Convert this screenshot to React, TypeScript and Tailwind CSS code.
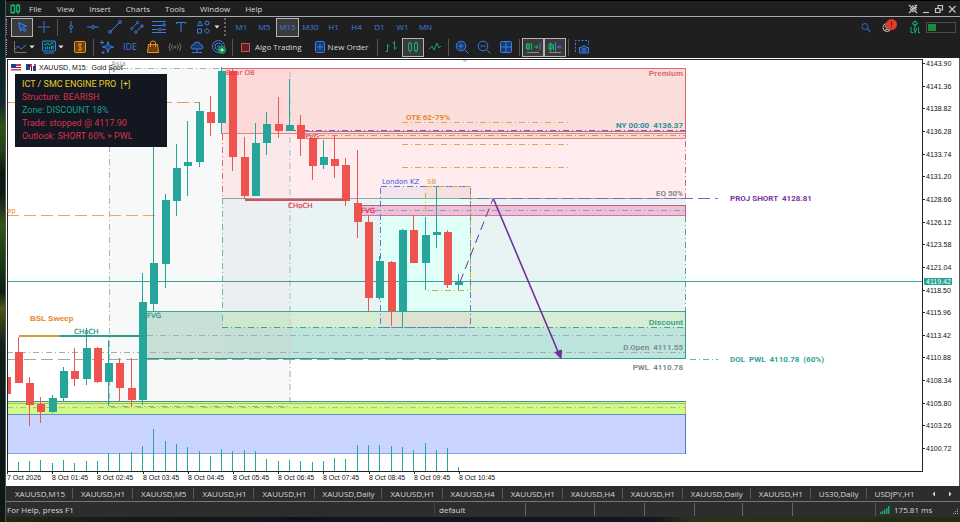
import type { ReactNode } from 'react'
import clsx from 'clsx'

const GREEN = '#26a69a'
const RED = '#ef5350'

const DASH = '6 3 1 3'
const LONG_DASH = '12 5'

// side, high, body top, body bottom, low (already in chart units), volume top
type Candle = [string, number, number, number, number, number]

const FIRST_X = 18.7
const STEP = 11.3

const candles: Candle[] = [
  ['r', 337, 352, 383, 383, 462],
  ['r', 377, 383, 405, 426, 461],
  ['r', 397, 404, 412, 423, 460],
  ['g', 395, 398, 412, 413, 463],
  ['g', 367, 371, 398, 402, 460],
  ['r', 348, 371, 379, 386, 463],
  ['g', 328, 348, 379, 385, 461],
  ['r', 347, 348, 382, 383, 461],
  ['g', 340, 363, 382, 406, 453],
  ['r', 358, 363, 388, 401, 453],
  ['r', 358, 388, 400, 407, 452],
  ['g', 273, 302, 400, 405, 446],
  ['g', 140, 263, 304, 311, 429],
  ['g', 194, 200, 264, 288, 441],
  ['g', 144, 168, 201, 216, 444],
  ['g', 121, 162, 166, 196, 447],
  ['g', 102, 111, 162, 167, 451],
  ['r', 96, 112, 123, 136, 456],
  ['g', 67, 71, 123, 134, 449],
  ['r', 68, 71, 157, 171, 451],
  ['r', 137, 157, 196, 199, 450],
  ['g', 123, 143, 196, 196, 451],
  ['g', 112, 124, 143, 155, 459],
  ['r', 97, 124, 131, 138, 461],
  ['g', 79, 125, 131, 131, 460],
  ['r', 115, 125, 139, 156, 461],
  ['r', 138, 138, 166, 180, 462],
  ['g', 140, 157, 165, 169, 461],
  ['r', 135, 159, 166, 178, 458],
  ['r', 158, 165, 201, 206, 459],
  ['r', 150, 203, 222, 238, 445],
  ['r', 215, 222, 298, 312, 445],
  ['g', 256, 261, 298, 300, 445],
  ['r', 261, 262, 311, 326, 446],
  ['g', 229, 230, 312, 327, 447],
  ['r', 215, 230, 263, 263, 450],
  ['g', 217, 235, 263, 290, 443],
  ['g', 187, 232, 235, 248, 450],
  ['r', 230, 232, 285, 288, 448],
  ['g', 274, 282, 285, 290, 467],
]

const prices = [
  '4143.90', '4141.36', '4138.82', '4136.28', '4133.74', '4131.20', '4128.66', '4126.12', '4123.58',
  '4121.04', '4118.50', '4115.96', '4113.42', '4110.88', '4108.34', '4105.80', '4103.26', '4100.72',
]

const times = [
  '7 Oct 2026', '8 Oct 01:45', '8 Oct 02:45', '8 Oct 03:45', '8 Oct 04:45', '8 Oct 05:45',
  '8 Oct 06:45', '8 Oct 07:45', '8 Oct 08:45', '8 Oct 09:45', '8 Oct 10:45',
]

const menus = ['File', 'View', 'Insert', 'Charts', 'Tools', 'Window', 'Help']
const frames = ['M1', 'M5', 'M15', 'M30', 'H1', 'H4', 'D1', 'W1', 'MN']
const tabs = [
  'XAUUSD,M15', 'XAUUSD,H1', 'XAUUSD,M5', 'XAUUSD,H1', 'XAUUSD,H1', 'XAUUSD,Daily', 'XAUUSD,H1', 'XAUUSD,H4',
  'XAUUSD,H1', 'XAUUSD,H4', 'XAUUSD,H1', 'XAUUSD,Daily', 'XAUUSD,H1', 'US30,Daily', 'USDJPY,H1',
]

interface IconProps {
  children: ReactNode
  className?: string
}

function Icon({ children, className = 'text-[#3b7de0]' }: IconProps) {
  return (
    <svg viewBox="0 0 16 16" className={clsx('size-4 shrink-0', className)} fill="none" stroke="currentColor" strokeWidth="1" aria-hidden="true">
      {children}
    </svg>
  )
}

function WindowButton({ label, path }: { label: string; path: string }) {
  return (
    <button type="button" aria-label={label}>
      <svg viewBox="0 0 10 10" className="size-[10px]" fill="none" stroke="#c4c4c4" strokeWidth="1.200" aria-hidden="true">
        <path d={path} />
      </svg>
    </button>
  )
}

interface ToolButtonProps {
  label: string
  active?: boolean
  narrow?: boolean
  children: ReactNode
}

function ToolButton({ label, active, narrow, children }: ToolButtonProps) {
  return (
    <button
      type="button"
      aria-label={label}
      className={clsx(
        'flex h-[19px] shrink-0 items-center justify-center',
        narrow ? 'w-[18px]' : 'w-[22px]',
        active && 'border border-[#b4b4b4] bg-[#3a3a3a]'
      )}
    >
      {children}
    </button>
  )
}

function Separator() {
  return <div className="mx-[2px] h-[17px] w-px shrink-0 bg-[#555]" />
}

function Chevron() {
  return (
    <svg viewBox="0 0 6 4" className="h-1 w-1.5 shrink-0" aria-hidden="true">
      <path d="M0.5 0.5h5L3 3.5z" fill="#e5e5e5" />
    </svg>
  )
}

function MenuBar() {
  return (
    <header className="flex h-4 items-center border-b border-[#a9a9a9] bg-[#1f1f1f] pr-[3px] pl-px">
      <Icon className="text-[#12b76a]">
        <path d="M4 4.500h3.500v7H4zM9.500 4.500h3v6h-3zM6 3v1.500M6 11.500V13M11 3v1.500M11 10.500V13" strokeWidth="1.300" />
      </Icon>
      <nav className="ml-[6px] flex gap-[15px]">
        {menus.map((m) => (
          <button key={m} type="button">{m}</button>
        ))}
      </nav>
      <div className="ml-auto flex items-center gap-[3px]">
        <WindowButton label="Pin" path="M1 1l8 8M9 1L1 9M4 1.500l4.500 4.500M6.500 1L9 3.500M2 4.500l3.500 3.500" />
        <WindowButton label="Minimize" path="M2 8.500h6" />
        <WindowButton label="Restore" path="M1.500 4.500h4.500v4H1.500zM4 4V1.500h4.500v4.500H6" />
        <WindowButton label="Close" path="M2 2l6.500 6.500M8.500 2L2 8.500" />
      </div>
    </header>
  )
}

function DrawingBar() {
  return (
    <div className="flex h-5 items-center pr-1">
      <div className="mr-1 h-4 border-l border-dotted border-[#999]" />
      <ToolButton label="Cursor" active>
        <Icon><path d="M4.500 3.500l8 3.500-3.200 1.200 2.700 3-1.500 1.300-2.600-3-1.400 2.700z" fill="#1d4f9c" /></Icon>
      </ToolButton>
      <ToolButton label="Crosshair">
        <Icon><path d="M8 2v4.500M8 9.500V14M2 8h4.500M9.500 8H14M8 7v2M7 8h2" /></Icon>
      </ToolButton>
      <Separator />
      <ToolButton label="Vertical line">
        <Icon><path d="M8 2v4M8 10v4" /><circle cx="8" cy="8" r="1.500" /></Icon>
      </ToolButton>
      <ToolButton label="Horizontal line">
        <Icon><path d="M2 8h4M10 8h4" /><circle cx="8" cy="8" r="1.500" /></Icon>
      </ToolButton>
      <ToolButton label="Trendline">
        <Icon><path d="M4 12l8-8" /><circle cx="3" cy="13" r="1.400" /><circle cx="13" cy="3" r="1.400" /></Icon>
      </ToolButton>
      <ToolButton label="Channel">
        <Icon><path d="M3.800 8.500l3.900-4M7.800 12l4.200-4" /><circle cx="8.500" cy="3.500" r="1.200" /><circle cx="2.800" cy="9.500" r="1.200" /><circle cx="13" cy="7" r="1.200" /><circle cx="6.800" cy="13" r="1.200" /></Icon>
      </ToolButton>
      <ToolButton label="Fibonacci">
        <Icon><path d="M1 2.500h14M1 6.500h10M1 10.500h6M11 10.500h4M1 13.500h14" /><circle cx="13" cy="6" r="1.300" /><circle cx="9" cy="10.500" r="1.300" /></Icon>
      </ToolButton>
      <ToolButton label="Text">
        <Icon><path d="M3.500 5V3.500h9V5M8 3.500v9.500" /></Icon>
      </ToolButton>
      <ToolButton label="Objects">
        <Icon><path d="M5 2L7.500 6.500h-5z" /><circle cx="12" cy="4" r="2" /><path d="M2.500 10h4v4h-4zM12 9.500l2.500 2.500-2.500 2.500L9.500 12z" /></Icon>
      </ToolButton>
      <Chevron />
      <div className="mx-1 h-[18px] border-l-2 border-dotted border-[#666]" />
      {frames.map((f) => (
        <button
          key={f}
          type="button"
          className={clsx(
            'h-[19px] w-[23px] shrink-0 text-center text-[#3b7de0]',
            f === 'M15' && 'border border-[#b4b4b4] bg-[#3a3a3a]'
          )}
        >
          {f}
        </button>
      ))}
      <div className="ml-auto flex items-center">
        <button type="button" aria-label="Search" className="mr-2">
          <Icon className="text-[#3268c0]"><circle cx="8" cy="7.500" r="3" /><path d="M10.300 9.800l3 3" strokeWidth="1.300" /></Icon>
        </button>
        <button type="button" aria-label="Account, 1 alert" className="relative mr-2">
          <Icon className="text-[#bdbdbd]"><circle cx="6" cy="8.500" r="4" /><circle cx="6" cy="7.500" r="1.500" /><path d="M3.500 11.500q2.500-3 5 0" /></Icon>
          <svg viewBox="0 0 11 11" className="absolute top-0 right-0 size-[11px]" aria-hidden="true">
            <circle cx="5.500" cy="5.500" r="5.500" fill="#e03a28" />
            <path d="M5.500 2.500v4M5.500 7.500v1" stroke="#5a100a" />
          </svg>
        </button>
        <div className="mr-px flex w-5 flex-col items-center">
          <svg viewBox="0 0 12 14" className="h-3.5 w-3" fill="none" stroke="#12a467" strokeWidth="1.100" aria-label="Level">
            <path d="M6 1l2.500 2.500L6 6 3.500 3.500zM6 4v4M2 7v5.500h2.500M4.800 8l1.400 4.500L7.600 8M9.500 7v5.500h1.500" />
          </svg>
        </div>
        <div className="h-[11px] w-[30px] border border-[#4c4c4c] p-px">
          <div className="h-full w-2 bg-[#1d8a3a]" />
        </div>
      </div>
    </div>
  )
}

function StandardBar() {
  return (
    <div className="flex h-5 items-center">
      <div className="mr-1 h-4 border-l border-dotted border-[#999]" />
      <ToolButton label="Line studies" narrow>
        <Icon><path d="M2.500 2v11.500h12" stroke="#777" /><path d="M3 10.500l3-3.500 3 3 5-4" /></Icon>
      </ToolButton>
      <Chevron />
      <div className="w-[5px]" />
      <ToolButton label="Indicators" narrow>
        <Icon><rect x="1.500" y="2" width="13" height="10" rx="1" fill="#12304f" /><path d="M3 14h10" /><path d="M3.500 6l3-1.500 2 1 4-2M4.500 10V8M6.500 10V7.500M8.500 10V8M10.500 10V7M12 10V6.500" stroke="#12b76a" /></Icon>
      </ToolButton>
      <Chevron />
      <div className="w-[5px]" />
      <ToolButton label="Trade">
        <Icon className="text-[#e8952b]"><rect x="2.500" y="2.500" width="11" height="11" rx="1" fill="#6a400c" /><path d="M10 5.800q-1-1-2.200-.9c-2.400.2-2 2.700.2 3.100 2.400.4 2.600 3 0 3.100q-1.400 0-2.300-1M8 3.800v8.400" /></Icon>
      </ToolButton>
      <Separator />
      <ToolButton label="Assistant">
        <Icon><path d="M9 2.500l1.300 4.200L14.500 8l-4.200 1.300L9 13.500 7.700 9.300 3.500 8l4.200-1.300z" fill="#173c70" /><path d="M3 1.500v4M1 3.500h4M4 12v3M2.500 13.500h3" /></Icon>
      </ToolButton>
      <button type="button" className="w-6 text-center text-[9px] text-[#3b7de0]">IDE</button>
      <ToolButton label="Market">
        <Icon className="text-[#e8952b]"><path d="M3.500 5.500h9l1 8h-11z" fill="#6a400c" /><path d="M5.500 8V4q0-2 2.500-2t2.500 2v4" /></Icon>
      </ToolButton>
      <ToolButton label="Signals">
        <Icon className="text-[#6f6f6f]"><circle cx="8" cy="8" r="1" /><path d="M5.500 5.500q-1.800 2.500 0 5M10.500 5.500q1.800 2.500 0 5M3.500 4q-3 4 0 8M12.500 4q3 4 0 8" /></Icon>
      </ToolButton>
      <ToolButton label="Cloud">
        <Icon><path d="M4 10q-2.500-.3-2-2.500Q2.500 6 4.300 6 5 3 8 3t3.500 3q2.500 0 2.500 2t-2.300 2z" fill="#173c70" /><path d="M8 10v3M3 13.500h10M6.500 13.500h3" /></Icon>
      </ToolButton>
      <ToolButton label="Network">
        <Icon><circle cx="7.500" cy="7.500" r="6" /><circle cx="7.500" cy="7.500" r="3.500" /><circle cx="7.500" cy="7.500" r="1" /><circle cx="11" cy="11" r="3.500" fill="#0e7d43" stroke="#12b76a" /><path d="M11 9v4M9 11h4" stroke="#d7f7e5" /></Icon>
      </ToolButton>
      <Separator />
      <button type="button" className="ml-[6px] flex items-center gap-[5px]">
        <span className="size-[9px] border border-[#cf5050] bg-[#5a2222]" />
        Algo Trading
      </button>
      <button type="button" className="mr-[6px] ml-[10px] flex items-center">
        <Icon><rect x="3.500" y="2.500" width="9" height="11" rx="1" fill="#173c70" /><path d="M8 5v6M5 8h6" /></Icon>
        New Order
      </button>
      <Separator />
      <ToolButton label="Bar chart">
        <Icon className="text-[#12a467]"><path d="M4.500 5v8M2.500 12.500h2M4.500 7h2M11.500 2v9M9.500 4h2M11.500 9h2.500" /></Icon>
      </ToolButton>
      <ToolButton label="Candlesticks" active>
        <Icon className="text-[#12b76a]"><path d="M3.500 4.500h3v7h-3zM9.500 4.500h3v7h-3zM5 2.500v2M5 11.500v2M11 2.500v2M11 11.500v2" /></Icon>
      </ToolButton>
      <ToolButton label="Line chart">
        <Icon className="text-[#12a467]"><path d="M2 10l3-3 2 4 3-7 2 5 2-2" /></Icon>
      </ToolButton>
      <Separator />
      <ToolButton label="Zoom in">
        <Icon><circle cx="7" cy="7" r="4.800" fill="#173c70" /><path d="M10.500 10.500l4 4M7 4.500v5M4.500 7h5" /></Icon>
      </ToolButton>
      <ToolButton label="Zoom out">
        <Icon><circle cx="7" cy="7" r="4.800" /><path d="M10.500 10.500l4 4M4.500 7h5" /></Icon>
      </ToolButton>
      <ToolButton label="Tile windows">
        <Icon><rect x="2.500" y="2.500" width="11" height="11" rx="1" fill="#173c70" /><path d="M8 2.500v11M2.500 8h11" /></Icon>
      </ToolButton>
      <Separator />
      <ToolButton label="Auto scroll" active>
        <Icon className="text-[#12b76a]"><path d="M3 4v7M1.500 5h3v5h-3zM6.500 4v7M9 8h4M11.500 6.500L13 8l-1.500 1.500" /><path d="M2 13.500h12" stroke="#888" /><path d="M15 4v7" stroke="#3b7de0" /></Icon>
      </ToolButton>
      <ToolButton label="Chart shift" active>
        <Icon className="text-[#12b76a]"><path d="M3.500 3.500v9M2 5h3v5H2zM6.500 5v6" /><path d="M8.500 3v10M14.500 8h-4M12 6.500L10.500 8 12 9.500" stroke="#3b7de0" /><path d="M2 13.500h12" stroke="#888" /></Icon>
      </ToolButton>
      <Separator />
      <ToolButton label="Screenshot">
        <Icon><path d="M1.500 13V1.500h13V6" strokeDasharray="2 1.500" /><path d="M5.500 8.500h2l1-1.500h3l1 1.500h2v5.500h-9z" fill="#173c70" /><circle cx="10" cy="11" r="1.500" /></Icon>
      </ToolButton>
    </div>
  )
}

interface LineProps {
  x1: number
  x2: number
  y: number
  color: string
  dash?: string
  width?: number
}

function HLine({ x1, x2, y, color, dash, width = 1 }: LineProps) {
  return <line x1={x1} x2={x2} y1={y} y2={y} stroke={color} strokeWidth={width} strokeDasharray={dash} />
}

function Zones() {
  return (
    <g shapeRendering="crispEdges">
      {/* Asia session */}
      <rect x="109" y="68" width="181" height="338" fill="#f7f9f9" />

      {/* premium / discount halves */}
      <rect x="222" y="68" width="464" height="66" fill="#f9dedb" />
      <rect x="222" y="68" width="68" height="66" fill="#fdd8d9" />
      <rect x="222" y="134" width="464" height="64" fill="#feecee" />
      <rect x="222" y="134" width="68" height="64" fill="#f9eae9" />
      <rect x="222" y="198" width="464" height="113" fill="#e8f4f3" />
      <rect x="222" y="198" width="68" height="113" fill="#eceff1" />

      {/* bullish gap */}
      <rect x="147" y="311" width="75" height="48" fill="#c8e0d8" />
      <rect x="222" y="311" width="464" height="16" fill="#d6ecd3" />
      <rect x="222" y="311" width="68" height="16" fill="#cfe8cd" />
      <rect x="222" y="327" width="464" height="32" fill="#bee4de" />
      <rect x="222" y="327" width="68" height="32" fill="#c4dfd7" />

      {/* killzones */}
      <rect x="380" y="186" width="91" height="12" fill="#f3e3ea" />
      <rect x="425" y="186" width="46" height="12" fill="#f8dfdf" />
      <rect x="380" y="198" width="91" height="113" fill="#e0fff6" />
      <rect x="380" y="311" width="91" height="16" fill="#dde3d0" />

      {/* bearish gaps */}
      <rect x="306" y="134" width="380" height="4" fill="#fbdac5" />
      <rect x="362" y="205" width="324" height="10" fill="#e8c2da" />

      {/* lower order blocks */}
      <rect x="7" y="402" width="679" height="12" fill="#d0fa8a" />
      <rect x="7" y="414" width="679" height="39" fill="#c9d5ff" />
    </g>
  )
}

function Levels() {
  return (
    <g shapeRendering="crispEdges">
      <HLine x1={109} x2={222} y={68.5} color="#a9b0b0" dash={DASH} />
      <line x1="109.500" x2="109.500" y1="68" y2="406" stroke="#a9b4b4" strokeDasharray={DASH} />
      <line x1="290" x2="290" y1="72" y2="406" stroke="#cfd2d4" strokeWidth="2" strokeDasharray={DASH} />

      <HLine x1={222} x2={686} y={68.5} color="#e2646c" />
      <line x1="685.500" x2="685.500" y1="68" y2="138" stroke="#e2646c" />
      <HLine x1={222} x2={306} y={133.5} color="#e88080" />
      <HLine x1={301} x2={686} y={131.5} color="#d0629a" />
      <HLine x1={290} x2={686} y={130.5} color="#6c6f9d" dash={DASH} />
      <HLine x1={306} x2={686} y={133.5} color="#e5849a" />
      <HLine x1={306} x2={686} y={135.5} color="#b09f8f" dash={DASH} />
      <HLine x1={306} x2={686} y={138.5} color="#f07d8a" />
      <line x1="685.500" x2="685.500" y1="141" y2="198" stroke="#d8607a" strokeDasharray={DASH} />
      <line x1="685.500" x2="685.500" y1="216" y2="311" stroke="#45a898" strokeDasharray={DASH} />
      <line x1="222.500" x2="222.500" y1="134" y2="198" stroke="#e2646c" strokeDasharray={DASH} />
      <line x1="222.500" x2="222.500" y1="198" y2="327" stroke="#6fb5aa" strokeDasharray={DASH} />

      <HLine x1={222} x2={686} y={198.5} color="#8fa5ad" />
      <HLine x1={460} x2={718} y={198.5} color="#8a63b5" dash={LONG_DASH} />
      <HLine x1={362} x2={686} y={205.5} color="#dd5573" />
      <HLine x1={362} x2={686} y={210.5} color="#ac8fb0" dash={DASH} />
      <HLine x1={362} x2={686} y={215.5} color="#e4718c" />
      <line x1="685.500" x2="685.500" y1="205" y2="216" stroke="#dd5573" />

      {[122.5, 144.5, 167.5].map((y) => (
        <HLine key={y} x1={402} x2={568} y={y} color="#e2a558" dash={DASH} />
      ))}

      <HLine x1={7} x2={200} y={102.5} color="#e99c4b" dash={LONG_DASH} />
      <HLine x1={7} x2={155} y={215.5} color="#f0a55a" dash={LONG_DASH} />

      <HLine x1={147} x2={686} y={311.5} color="#3fa696" />
      <HLine x1={222} x2={686} y={327.5} color="#4ba08a" dash={DASH} />
      <HLine x1={147} x2={686} y={335.5} color="#96b3ad" dash={DASH} />
      <HLine x1={7} x2={686} y={352.5} color="#9fb0ac" dash={DASH} />
      <HLine x1={7} x2={147} y={359.5} color="#a0a5a5" dash={LONG_DASH} />
      <HLine x1={147} x2={686} y={358.5} color="#2f9d8c" />
      <HLine x1={147} x2={450} y={359.5} color="#7fa8a2" dash={LONG_DASH} />
      <line x1="685.500" x2="685.500" y1="311" y2="359" stroke="#2f9d8c" />
      <HLine x1={690} x2={718} y={359.5} color="#5db8ab" dash={DASH} />

      <rect x="380.500" y="186.500" width="90" height="141" fill="none" stroke="#6473d6" strokeDasharray={DASH} />
      <rect x="425.500" y="186.500" width="45" height="104" fill="none" stroke="#cfae3c" strokeDasharray={DASH} />

      <HLine x1={7} x2={686} y={401.5} color="#2f9d8c" />
      <HLine x1={7} x2={686} y={403.5} color="#c9a66a" />
      <HLine x1={7} x2={686} y={407.5} color="#a6c48d" dash={DASH} />
      <HLine x1={109} x2={290} y={406.5} color="#9aa894" dash={DASH} />
      <HLine x1={7} x2={686} y={414.5} color="#5f8fc0" />
      <HLine x1={7} x2={686} y={453.5} color="#86a4ee" />
      <line x1="685.500" x2="685.500" y1="414" y2="454" stroke="#4f76df" />
      <line x1="685.500" x2="685.500" y1="403" y2="414" stroke="#d2b24c" />

      <HLine x1={7} x2={922} y={281.5} color="#38a398" />
    </g>
  )
}

function Candles() {
  return (
    <g shapeRendering="crispEdges">
      <rect x="7" y="377" width="4" height="17" fill={RED} />
      {candles.map(([side, high, top, bottom, low, vol], i) => {
        const x = Math.round(FIRST_X + i * STEP)
        const color = side === 'g' ? GREEN : RED
        return (
          <g key={i} fill={color}>
            <rect x={x - 1} y={high} width="1" height={low - high} />
            <rect x={x - 4} y={top} width="8" height={bottom - top} />
            <rect x={x - 1} y={vol} width="1" height={471 - vol} fill={GREEN} />
          </g>
        )
      })}
      <HLine x1={19} x2={86} y={336} color="#d79a3c" width={2} />
      <HLine x1={60} x2={143} y={336} color="#2f9d8c" width={2} />
      <HLine x1={245} x2={347} y={200} color="#dc4a58" width={2} />
    </g>
  )
}

function Projection() {
  return (
    <g stroke="#70309a" fill="#70309a">
      <path d="M460 282L493 199" strokeDasharray="9 5" fill="none" />
      <path d="M493.500 199L559 354" strokeWidth="1.600" fill="none" />
      <path d="M561 358.500L555 352.500L561.500 350z" />
    </g>
  )
}

function Labels() {
  return (
    <>
      <g fontFamily="'DejaVu Sans', sans-serif" fontSize="7">
        <text x="111" y="66" fill="#8d9696">Asia</text>
        <text x="226" y="75" fill="#e0343f">Bear OB</text>
        <text x="305" y="139" fill="#e0343f">FVG</text>
        <text x="382" y="184" fill="#4257dd">London KZ</text>
        <text x="427" y="184" fill="#d2a22c">SB</text>
        <text x="361" y="213" fill="#dd3050" stroke="#dd3050" strokeWidth="0.200">FVG</text>
        <text x="147" y="318" fill="#2a9586" stroke="#2a9586" strokeWidth="0.200">FVG</text>
        <text x="288" y="208" fill="#dd3a4a" stroke="#dd3a4a" strokeWidth="0.200">CHoCH</text>
        <text x="74" y="334" fill="#2a9586" stroke="#2a9586" strokeWidth="0.200">CHoCH</text>
        <text x="7" y="213" fill="#e8862a">ep</text>
      </g>
      <g fontFamily="'Liberation Sans', Arial, sans-serif" fontSize="8" fontWeight="700">
        <text x="30" y="321" fill="#e8862a">BSL Sweep</text>
        <text x="683" y="76" fill="#e5606a" textAnchor="end">Premium</text>
        <text x="683" y="325" fill="#3aa389" textAnchor="end">Discount</text>
      </g>
      <g fontFamily="Roboto, sans-serif" fontSize="8" fontWeight="700">
        <text x="406" y="120" fill="#e8862a">OTE 62-79%</text>
        <text x="730" y="201" fill="#7b35a5">{'PROJ SHORT \u00a04128.81'}</text>
        <text x="730" y="362" fill="#2fa594">{'DOL \u00a0PWL \u00a04110.78 \u00a0(60%)'}</text>
        <g textAnchor="end">
          <text x="683" y="128" fill="#2c8f9c">{'NY 00:00 \u00a04136.37'}</text>
          <text x="683" y="196" fill="#8a8590">EQ 50%</text>
          <text x="683" y="350" fill="#7d8f90">{'D.Open \u00a04111.55'}</text>
          <text x="683" y="370" fill="#85898c">{'PWL \u00a04110.78'}</text>
        </g>
      </g>
    </>
  )
}

function Axes() {
  return (
    <g fontFamily="'Liberation Sans', Arial, sans-serif" fontSize="7" fill="#111">
      <g shapeRendering="crispEdges" stroke="#222">
        <path d="M7 59.500H923M7.500 59V472M922.500 59V472M7 471.500H923" fill="none" />
        <path d="M959.500 58V486" stroke="#555" />
      </g>
      {prices.map((p, i) => {
        const y = 63.5 + i * 22.65
        return (
          <g key={p}>
            <HLine x1={923} x2={925} y={Math.floor(y) + 0.5} color="#222" />
            <text x="926" y={Math.round(y + 2.5)}>{p}</text>
          </g>
        )
      })}
      <rect x="924" y="278" width="28" height="7" fill="#26a192" />
      <text x="926" y="284" fill="#fff">4119.42</text>
      {times.map((t, i) => {
        const x = Math.round(7 + i * 45.2)
        return (
          <g key={t}>
            <rect x={x} y="472" width="1" height="2" fill="#222" />
            <text x={x} y="480">{t}</text>
          </g>
        )
      })}
    </g>
  )
}

function Chart() {
  return (
    <main className="relative bg-white">
      <svg viewBox="6 58 954 428" className="block h-auto w-full" role="img" aria-label="XAUUSD M15 chart">
        <Zones />
        <Levels />
        <Candles />
        <Projection />
        <Axes />
        <Labels />
        <path d="M462 60h6l-3 2.500z" fill="#d0d0d0" />
        {/* symbol header */}
        <path d="M11 64h10v2H11zM11 69h10v1.500H11z" fill="#d23a45" />
        <path d="M11 64h5v3h-5zM11 67h10v1H11z" fill="#1d3f8f" />
        <path d="M26 64h4v6h-4zM33 66h3v5h-3z" fill="#24418c" />
        <path d="M29 65h3v6h-1v-4h-2z" fill="#222" />
        <path d="M30 64h2v3h-2zM34 64h2v2h-2z" fill="#d23a45" />
        <text x="39" y="70" fontFamily="'Liberation Sans', Arial, sans-serif" fontSize="7" fill="#111">
          {'XAUUSD, M15: \u00a0Gold Spot'}
        </text>
      </svg>
      <aside className="absolute top-4 left-[9px] flex h-[73px] w-[152px] flex-col justify-center bg-[#131722] pl-[7px] font-['Roboto',sans-serif] text-[9px] leading-[13px] text-[#d8334a]">
        <p className="text-[#e3cf1f]">ICT / SMC ENGINE PRO &nbsp;[+]</p>
        <p>Structure: BEARISH</p>
        <p className="text-[#1f9a86]">Zone: DISCOUNT 18%</p>
        <p>Trade: stopped @ 4117.90</p>
        <p>Outlook: SHORT 60% &gt; PWL</p>
      </aside>
    </main>
  )
}

function TabBar() {
  return (
    <nav className="flex h-4 items-center border-b border-[#777] bg-[#2d2d2d] pl-px">
      {tabs.map((t, i) => (
        <button key={i} type="button" className="h-[11px] shrink-0 border-r border-[#5a5a5a] pr-[7px] pl-2 leading-[11px] last-of-type:border-r-0">
          {t}
        </button>
      ))}
      <div className="ml-auto flex gap-3 pr-2">
        <svg viewBox="0 0 4 6" className="h-1.5 w-1" aria-hidden="true"><path d="M3 0.500v5L0.500 3z" fill="#ddd" /></svg>
        <svg viewBox="0 0 4 6" className="h-1.5 w-1" aria-hidden="true"><path d="M1 0.500v5L3.500 3z" fill="#ddd" /></svg>
      </div>
    </nav>
  )
}

function StatusBar() {
  return (
    <footer className="flex h-[15px] items-center bg-[#2d2d2d] pl-px">
      <span className="flex-1">For Help, press F1</span>
      <span className="w-[91px] border-l border-[#444] pl-1 leading-[13px]">default</span>
      {[69, 50, 50, 48, 50, 83].map((w, i) => (
        <span key={i} className="h-[13px] border-l border-[#666]" style={{ width: w }} />
      ))}
      <span className="flex w-[85px] items-center gap-1 border-l border-[#555] pl-1 leading-[13px]">
        <svg viewBox="0 0 10 8" className="h-2 w-2.5" aria-hidden="true">
          <path d="M0 6h1.500v2H0zM2 5h1.500v3H2zM4 3.500h1.500V8H4zM6 2h1.500v6H6zM8 0h1.500v8H8z" fill="#16a566" />
        </svg>
        175.81 ms
        <svg viewBox="0 0 6 6" className="mt-1 mr-px ml-auto size-1.5" aria-hidden="true">
          <path d="M4 0h1v1H4zM2 2h1v1H2zM4 2h1v1H4zM0 4h1v1H0zM2 4h1v1H2zM4 4h1v1H4z" fill="#aaa" />
        </svg>
      </span>
    </footer>
  )
}

export default function App() {
  return (
    <div className="flex min-h-screen bg-[#0e1512] font-['Open_Sans','Noto_Sans',sans-serif] text-[8px] leading-[12px] whitespace-nowrap text-[#d6d6d6]">
      {/* desktop showing behind the terminal window */}
      <div className="w-1.5 shrink-0 border-r border-[#555] bg-[linear-gradient(#0b1a1c,#12292c_20%,#2f5217_24%,#26401a_29%,#0c1712_33%,#0d1a12_37%,#34551a_43%,#1c3a14_50%,#0e1d16_56%,#4f5416_59%,#10201d_66%,#0c1719_85%,#0d1a0b)]" />
      <div className="flex min-w-0 flex-1 flex-col border-t border-black">
        <MenuBar />
        <div className="h-[41px] bg-[#1f1f1f]">
          <DrawingBar />
          <StandardBar />
        </div>
        <Chart />
        <TabBar />
        <StatusBar />
        <div className="min-h-[5px] flex-1 bg-[linear-gradient(90deg,#1c2a10,#141a16_12%,#0d1318_30%,#12171b_68%,#26351a_72%,#1e2c10)]" />
      </div>
    </div>
  )
}
